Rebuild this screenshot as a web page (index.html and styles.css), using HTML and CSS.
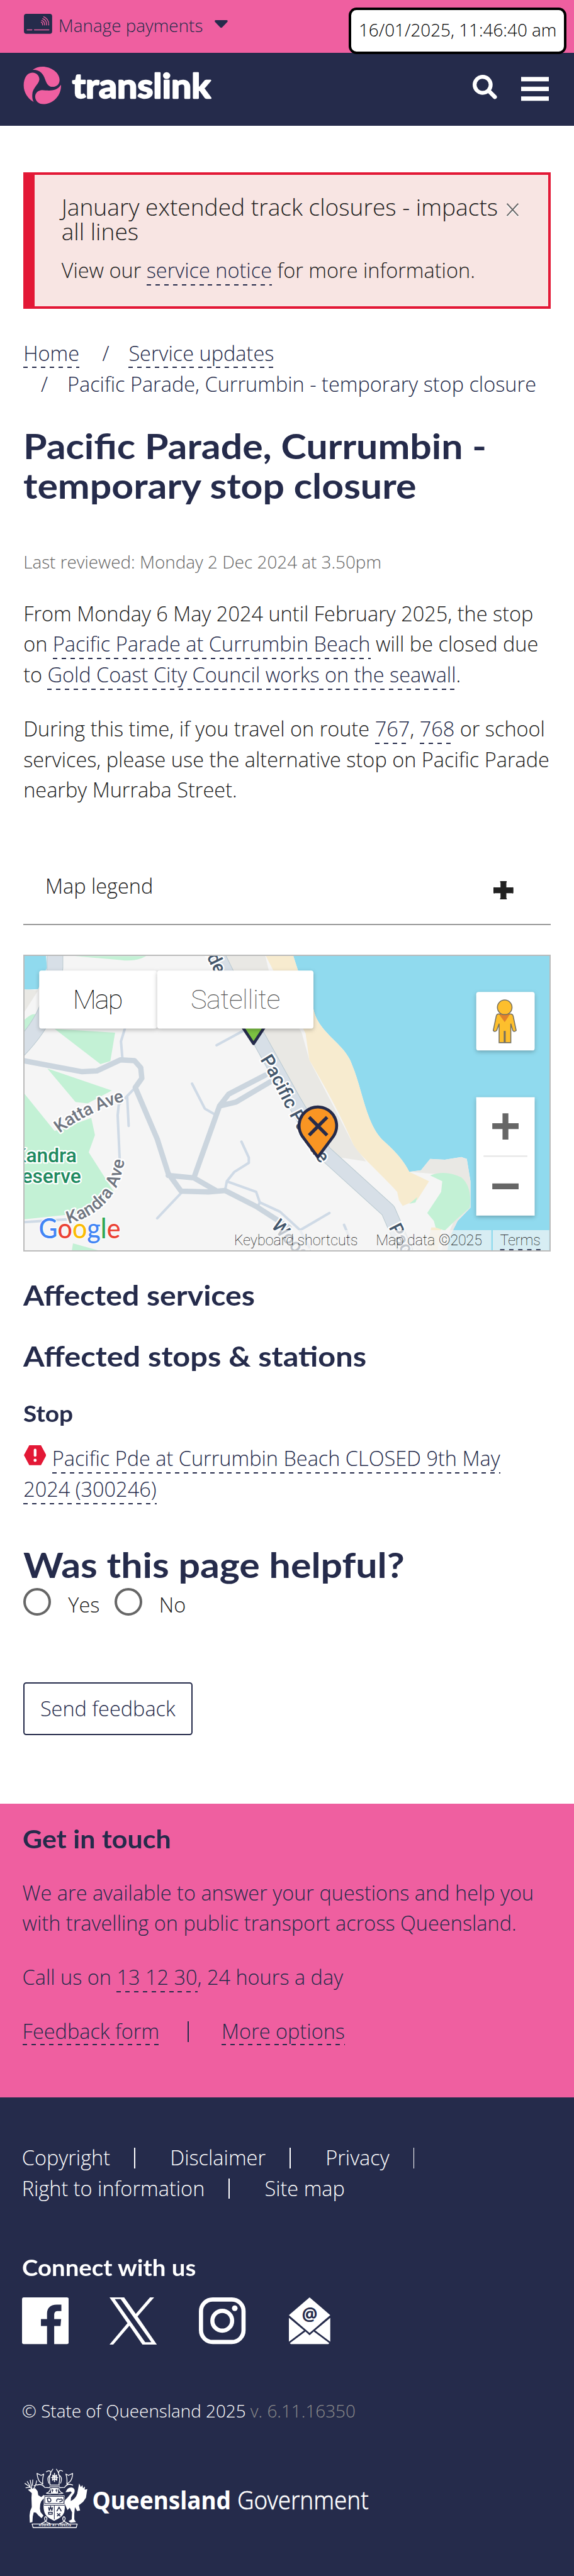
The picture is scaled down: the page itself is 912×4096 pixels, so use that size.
FILE: index.html
```html
<!DOCTYPE html>
<html lang="en">
<head>
<meta charset="utf-8">
<title>Pacific Parade, Currumbin - temporary stop closure | Translink</title>
<link rel="stylesheet" href="styles.css">
</head>
<body>
<div class="topbar">
  <svg class="card-icon" viewBox="0 0 58 41">
    <rect width="58" height="41" rx="5" fill="#252b4b"/>
    <g fill="none" stroke="#ef5fa0" stroke-width="1.7" stroke-linecap="round">
      <path d="M6.500 33h10M21.500 33h30"/>
      <path d="M35.500 17q3 1 3 6M36.500 13.500q6 2 6 9.500M38.500 10q8.500 3 8 13M40.500 6q11 4.500 10.500 17"/>
    </g>
  </svg>
  <span class="manage">Manage payments</span>
  <svg class="caret" viewBox="0 0 27 16"><path d="M2 0H25Q28 1 26 4L15.500 15Q13.500 16.500 11.500 15L1 4Q-1 1 2 0Z" fill="#252b4b"/></svg>
  <div class="clock">16/01/2025, 11:46:40 am</div>
</div>
<header class="header">
  <svg class="brand" viewBox="24 350 1164 232">
    <g fill="#ef5fa0">
      <path d="M78 370Q105 350 142 350C190 350 246 385 246 432C246 462 225 475 203 475C180 475 168 462 157 430C145 395 125 368 78 370Z"/>
      <path d="M86 568C50 550 24 510 24 466C24 420 45 387 78 387C105 387 122 408 121 430C118 460 78 480 77 525C76 545 80 558 86 568Z"/>
      <path d="M255 462C258 530 205 582 145 582C115 582 97 562 95 538C94 512 115 496 138 495C175 497 225 508 255 462Z"/>
    </g>
    <text class="brand-name" x="324" y="546" textLength="858" lengthAdjust="spacingAndGlyphs">translink</text>
  </svg>
  <div class="header-tools">
    <svg class="search-icon" viewBox="0 0 50 50"><circle cx="20.500" cy="20.500" r="16.500" fill="none" stroke="#fff" stroke-width="8"/><path d="M33 33L45.500 45.500" stroke="#fff" stroke-width="8.500" stroke-linecap="round"/></svg>
    <svg class="menu-icon" viewBox="0 0 57 50"><path d="M0 1h57v8H0zM0 21h57v8H0zM0 41h57v8H0z" fill="#fff" stroke="#fff"/></svg>
  </div>
</header>

<main class="main">
  <section class="alert">
    <div class="alert-title">January extended track closures - impacts<br>all lines</div>
    <p class="alert-text">View our <a>service notice</a> for more information.</p>
    <span class="alert-close"><svg viewBox="0 0 27 29"><path d="M2 4L25 28M25 4L2 28" stroke="#fff" stroke-width="2.500"/><path d="M2 1L25 26M25 1L2 26" stroke="#666" stroke-width="2.500"/></svg></span>
  </section>

  <nav class="crumbs">
    <div class="crumb-row"><a>Home</a><span class="slash">/</span><a>Service updates</a></div>
    <div class="crumb-row second"><span class="slash">/</span><span>Pacific Parade, Currumbin - temporary stop closure</span></div>
  </nav>

  <h1 class="title">Pacific Parade, Currumbin -<br>temporary stop closure</h1>
  <p class="reviewed">Last reviewed: Monday 2 Dec 2024 at 3.50pm</p>
  <p class="para">From Monday 6 May 2024 until February 2025, the stop<br>on <a>Pacific Parade at Currumbin Beach</a> will be closed due<br>to <a>Gold Coast City Council works on the seawall</a>.</p>
  <p class="para">During this time, if you travel on route <a>767</a>, <a>768</a> or school<br>services, please use the alternative stop on Pacific Parade<br>nearby Murraba Street.</p>

  <div class="legend"><span>Map legend</span><svg class="plus" viewBox="0 0 41 38"><path d="M20.500 1V37M1 19H40" stroke="#212121" stroke-width="12"/><path d="M15 1.500H26M15 36.500H26M1.500 14V24M39.500 14V24" stroke="#212121" stroke-width="3" stroke-linecap="round"/></svg></div>

  <div class="map">
  <svg class="map-canvas" viewBox="51 1965 1077 605" preserveAspectRatio="none">
    <rect x="51" y="1965" width="1077" height="605" fill="#f5f5f5"/>
    <g transform="translate(0 1750) scale(.7519 .5421)">
      <!-- water -->
      <path fill="#90daee" d="M800 390L815 455 857 600C870 690 945 730 962 810C990 900 1000 1040 1050 1100C1090 1150 1105 1180 1118 1214L1150 1208 1175 1165 1215 1168 1260 1158 1275 1165 1285 1250V1350L1250 1400 1225 1470 1222 1520H1510V390ZM60 390H126L129 440 105 522 60 525Z"/>
      <path fill="#e9e8e4" d="M60 522L105 527 60 625ZM600 390H724L735 455 825 690 845 790 965 1110 1000 1175 930 1160 880 1130 720 690ZM1118 1214L1150 1208 1175 1165 1215 1168 1260 1158 1275 1165 1285 1250V1350L1250 1400 1225 1470 1222 1512 1205 1512 1240 1400 1270 1270 1210 1225Z"/>
      <path fill="#f7ebcf" d="M724 390H800L815 455 857 600C870 690 945 730 962 810C990 900 1000 1040 1050 1100C1090 1150 1105 1180 1118 1214L1172 1250 1140 1320 1100 1343 1090 1322 1085 1290C1040 1220 980 1150 965 1110C930 1000 900 920 845 790L835 690ZM1178 1425H1206L1195 1512H1165Z"/>
      <path fill="#c3f1d5" d="M1175 1228Q1215 1205 1260 1235Q1290 1270 1283 1350L1250 1390 1215 1437 1190 1425 1185 1400 1167 1370 1205 1290 1208 1250ZM1118 1335L1140 1310 1135 1330ZM205 397L400 397Q370 420 330 412ZM60 650Q85 610 100 618L95 670 60 720ZM150 673L315 687 302 795 275 806ZM130 823L306 906 240 955 207 950ZM60 905L150 1060 250 1010 260 1075 243 1140 312 1290 230 1370 60 1395ZM200 1485L270 1512H197Z"/>
      <!-- roads -->
      <g class="roads">
        <g stroke="#cfdae6" stroke-width="4">
          <path d="M342 670L331 720 335 785M370 895L325 960 322 1000 328 1180M348 930L352 1040M525 880L560 975 585 995M660 1100L680 1160V1180L640 1215 620 1250 615 1285M620 1250L700 1290 710 1330 765 1365 820 1435 900 1370M710 1330L703 1350M592 735L665 680M495 1295L430 1390M60 1405L120 1400 190 1393M940 1415L960 1480M820 1435L850 1512"/>
        </g>
        <g stroke="#cbd5de" stroke-width="8.500">
          <path d="M60 792L225 835 265 832 330 790 368 793 385 820 388 860 370 895 430 1090 460 1220 495 1287 570 1290 615 1285 700 1345 790 1425M460 1228L530 1237 590 1285M530 1237L600 965 625 920 725 848M600 965L645 950 740 872"/>
        </g>
        <path stroke="#b9c9d0" stroke-width="24" d="M590 380L700 690 800 940 885 1140 1060 1360 1110 1520"/>
        <path stroke="#d7dfe7" stroke-width="22" d="M590 380L700 690 800 940 885 1140 1060 1360 1110 1520"/>
        <path stroke="#b9c9d0" stroke-width="26" d="M151 380V440C145 560 130 640 50 755"/>
        <path stroke="#d7dfe7" stroke-width="24" d="M151 380V440C145 560 130 640 50 755"/>
      </g>
    </g>
    <!-- place names -->
    <defs>
      <path id="katta" d="M123 2329Q180 2285 266 2260"/>
      <path id="kandra" d="M141 2515C195 2500 248 2465 257 2376"/>
      <path id="pacific" d="M534 2178C575 2240 600 2320 662 2396"/>
    </defs>
    <g class="label">
      <text class="road"><textPath href="#katta" textLength="150">Katta Ave</textPath></text>
      <text class="road"><textPath href="#kandra" textLength="186">Kandra Ave</textPath></text>
      <text class="major"><textPath href="#pacific" textLength="248">Pacific Parade</textPath></text>
      <text class="major" transform="translate(443 2004) rotate(64)" text-anchor="end">Parade</text>
      <text class="major" transform="translate(556 2520) rotate(48)">Woodl</text>
      <text class="major" transform="translate(798 2522) rotate(63)">Pacific</text>
      <text class="park" x="158" y="2389" text-anchor="end">Kandra</text>
      <text class="park" x="167" y="2431" text-anchor="end">Reserve</text>
    </g>
    <!-- stop markers -->
    <g stroke="#252b4b" stroke-width="6" stroke-linejoin="round">
      <path fill="#7cc142" d="M521 2145L488 2095A39 39 0 1 1 554 2095Z"/>
      <path fill="#f99523" d="M653 2378L621 2335A38.500 38.500 0 1 1 685 2335Z"/>
      <path d="M635 2296L672 2333M672 2296L635 2333" stroke-width="7"/>
    </g>
    <!-- google -->
    <text class="google" x="80" y="2545" textLength="168" lengthAdjust="spacingAndGlyphs"><tspan fill="#4285f4">G</tspan><tspan fill="#ea4335">o</tspan><tspan fill="#fbbc05">o</tspan><tspan fill="#4285f4">g</tspan><tspan fill="#34a853">l</tspan><tspan fill="#ea4335">e</tspan></text>
    <!-- controls -->
    <g class="control">
      <rect x="81" y="1995" width="242" height="119" rx="5"/>
      <rect x="323" y="1995" width="321" height="119" rx="5"/>
      <rect x="978" y="2039" width="120" height="120" rx="5"/>
      <rect x="978" y="2255" width="120" height="243"/>
    </g>
    <text class="tab" x="150" y="2073.500" textLength="103">Map</text>
    <text class="tab muted" x="392" y="2073.500" textLength="184">Satellite</text>
    <g fill="#fdbf2d" stroke="#757061" stroke-width="2">
      <path d="M1024 2084H1048Q1053 2084 1054 2089L1060 2118Q1056 2122 1053 2118L1049 2104V2143H1037.500V2120H1035.500V2143H1025V2104L1020 2118Q1016 2122 1013 2118L1019 2089Q1020 2084 1024 2084Z"/>
      <path d="M1025 2085H1047L1036.500 2101Z" fill="#e0812c" stroke="none"/>
      <circle cx="1036.500" cy="2070.500" r="15"/>
    </g>
    <path d="M1011 2314.500H1065M1038 2288V2342M1011 2438H1065" stroke="#666" stroke-width="12"/>
    <path d="M993 2376H1083" stroke="#e6e6e6" stroke-width="3"/>
    <path d="M470 2528H1009V2570H470ZM1012 2528H1128V2570H1012Z" fill="#f5f5f5" opacity=".7"/>
    <g class="credit">
      <text x="481" y="2559" textLength="254">Keyboard shortcuts</text>
      <text x="772" y="2559" textLength="218">Map data ©2025</text>
      <text x="1027" y="2559" textLength="83">Terms</text>
    </g>
    <path d="M1027 2568.500H1110" stroke="#252b4b" stroke-width="3" stroke-dasharray="9 9.500"/>
  </svg>
  </div>

  <h2 class="h2 services">Affected services</h2>
  <h2 class="h2 stops">Affected stops &amp; stations</h2>
  <h3 class="h3 stop">Stop</h3>
  <p class="stop-item"><svg class="warn" viewBox="0 0 46 41"><path d="M11 0H35L46 20.500 35 41H11L0 20.500Z" fill="#e31836"/><path d="M23 10V21" stroke="#fff" stroke-width="5.500" stroke-linecap="round"/><circle cx="23" cy="31" r="3.200" fill="#fff"/></svg><a>Pacific Pde at Currumbin Beach CLOSED 9th May<br>2024 (300246)</a></p>

  <h1 class="title helpful">Was this page helpful?</h1>
  <div class="radios">
    <label class="radio"><span class="dot"></span>Yes</label>
    <label class="radio"><span class="dot"></span>No</label>
  </div>
  <button class="feedback">Send feedback</button>
</main>

<section class="contact">
  <h2 class="h2 touch">Get in touch</h2>
  <p>We are available to answer your questions and help you<br>with travelling on public transport across Queensland.</p>
  <p>Call us on <a>13 12 30</a>, 24 hours a day</p>
  <p class="pair"><a>Feedback form</a><span class="bar"></span><a>More options</a></p>
</section>

<footer class="footer">
  <div class="links"><span>Copyright</span><i class="bar"></i><span>Disclaimer</span><i class="bar"></i><span>Privacy</span><i class="bar"></i></div>
  <div class="links"><span>Right to information</span><i class="bar"></i><span>Site map</span></div>
  <h3 class="h3 connect">Connect with us</h3>
  <div class="social">
    <svg class="fb" viewBox="34 69 215 288" preserveAspectRatio="none"><path fill="#fff" d="M42 69H241Q249 70 249 80V346Q249 356 241 357H182V245H211L214 203H182V175Q182 155 196 153H215V114H196C164 113 149 135 149 170V203H121V245H149V357H42Q34 356 34 346V80Q34 70 42 69Z"/></svg>
    <svg class="xx" viewBox="437 66 218 295" preserveAspectRatio="none"><path fill="#fff" fill-rule="evenodd" d="M437 66H504L557 168 622 66H641L565 184 655 361H589L528 241 452 361H437V358L519 226ZM461 77L600 343H628L488 77Z"/></svg>
    <svg class="ig" viewBox="0 0 96 96"><rect x="4.300" y="4.300" width="87.400" height="87.400" rx="24" fill="none" stroke="#fff" stroke-width="8.600"/><circle cx="48" cy="48" r="20.300" fill="none" stroke="#fff" stroke-width="8.600"/><circle cx="73.700" cy="22.300" r="5.800" fill="#fff"/></svg>
    <svg class="mail" viewBox="0 0 85 96"><path fill="#fff" d="M42.500 0L85 36.500 42.500 73 0 36.500ZM0 42L31 68 0 91ZM85 42L54 68 85 91ZM34 70L42.500 78 51 70 83 94 81 96H4L2 94Z"/><text x="42.500" y="47.500" text-anchor="middle" class="at">@</text></svg>
  </div>
  <p class="copy">© State of Queensland 2025 <span>v. 6.11.16350</span></p>
  <svg class="gov" viewBox="44 5068 720 136">
    <g transform="translate(44 5068) scale(.3333)">
      <g fill="none" stroke="#fff" stroke-width="5" stroke-linejoin="round" stroke-linecap="round">
        <path d="M62 362H340L334 384H68ZM120 358Q160 345 152 322Q142 310 138 328Q140 352 172 358M284 358Q244 345 252 322Q262 310 266 328Q264 352 232 358"/>
        <path d="M172 118Q160 60 190 24M228 118Q240 60 212 24M150 40Q180 20 176 60Q150 70 165 110M250 36Q222 20 226 60Q252 70 238 110M92 50L118 62 134 54Q124 84 128 116L108 100Q96 84 92 50ZM312 50L286 62 270 54Q280 84 276 116L296 100Q310 84 312 50ZM92 122Q120 110 140 136L170 138M312 122Q280 108 262 136L232 138M172 122H230M170 132H232M176 142Q172 165 150 172L176 176M226 142Q230 165 252 172L226 176"/>
        <path d="M190 60L200 72 212 60 214 92 200 82 188 92ZM200 50V100M182 76H220" stroke-width="6"/>
        <path d="M18 112L44 130 64 150M24 138L46 136M32 100L50 130M50 92L60 140M66 90L64 124M90 96Q84 130 68 148M90 120L74 126"/>
      </g>
      <g fill="#fff">
        <path d="M36 150L62 144 82 142 96 160 100 184 118 196 134 182 138 200 118 222 112 240 110 268 114 288 132 310 120 326 100 308 86 292 72 290 66 316 64 350 48 354 46 310 50 282 60 258 58 200 60 172Z"/>
        <path d="M268 166Q282 132 310 138Q330 146 322 170L302 198 300 220Q330 208 340 176L352 112 362 134 372 122 376 142 388 130 386 150 402 146 394 200 376 226 350 246 358 278 340 282 326 258 322 300 322 334 332 350 300 354 286 344 306 334 308 290 294 262 280 276 262 236Q260 214 278 202L306 168Q300 156 290 164Z"/>
        <path d="M134 186H262V240Q266 262 260 290Q248 322 198 342Q148 322 138 290Q130 262 134 240Z"/>
        <path d="M180 140H222V176H178Z"/>
      </g>
      <g fill="none" stroke="#252b4b" stroke-width="4">
        <path d="M140 192H258V236H140ZM136 246H262M199 246V334M188 146V166M182 153H194M212 146V166M206 153H218"/>
        <path d="M156 204Q176 196 178 216Q176 230 160 224ZM214 224Q210 202 232 210Q250 202 248 220L230 226M164 258L168 280 176 256 184 280 188 258M164 290H186V302H164ZM214 284L228 258 242 284M216 296L236 314M236 296L216 314" stroke-width="6"/>
      </g>
      <text x="104" y="378" textLength="198" class="motto">AUDAX AT FIDELIS</text>
    </g>
    <text class="qld" x="188" y="5158.500" textLength="285" lengthAdjust="spacingAndGlyphs">Queensland</text>
    <text class="govt" x="486" y="5158.500" textLength="270" lengthAdjust="spacingAndGlyphs">Government</text>
  </svg>
</footer>
</body>
</html>
```
FILE: styles.css
```css
/* 1rem = 10 design pixels; the design is 1179 wide */
html { font-size: 7.7354px; }
* { box-sizing: border-box; }
body {
  margin: 0;
  background: #fff;
  color: #212121;
  font-family: "Open Sans", "Noto Sans", sans-serif;
  font-weight: 300;
  font-size: 4.2rem;
  line-height: 6.3rem;
  white-space: nowrap;
  overflow-x: hidden;
}
svg { display: block; }
p, h1, h2, h3 { margin: 0; }
a {
  color: #252b4b;
  padding-bottom: .3rem;
  background: repeating-linear-gradient(90deg, #252b4b 0 .9rem, transparent .9rem 1.8rem) left bottom / 100% .3rem no-repeat;
  -webkit-box-decoration-break: clone;
  box-decoration-break: clone;
}

.topbar {
  position: relative;
  display: flex;
  height: 10.8rem;
  padding: 2.9rem 0 0 4.9rem;
  background: #ef5fa0;
  color: #252b4b;
  font-size: 3.6rem;
}
.card-icon { width: 5.8rem; height: 4.1rem; }
.manage { margin: -.8rem 0 0 1.3rem; line-height: 6.3rem; width: 30.3rem; }
.caret { width: 2.7rem; height: 1.6rem; margin: 1.3rem 0 0 1.8rem; }
.clock {
  position: absolute;
  top: 1.5rem;
  right: 1.5rem;
  width: 44.8rem;
  height: 9.6rem;
  border: .6rem solid #000;
  border-radius: 1.6rem;
  background: #fff;
  color: #000;
  line-height: 8.1rem;
  text-align: center;
}
.header {
  display: flex;
  justify-content: space-between;
  height: 15rem;
  padding: 2.9rem 5.2rem 0 4.8rem;
  background: #252b4b;
}
.brand { width: 38.8rem; height: 7.7rem; overflow: visible; }
.brand-name {
  font: 700 212px Lato, sans-serif;
  fill: #fff;
  stroke: #fff;
  stroke-width: 9px;
  stroke-linejoin: round;
}
.header-tools { display: flex; gap: 4.9rem; padding-top: 1.7rem; }
.search-icon { width: 5rem; height: 5rem; }
.menu-icon { width: 5.7rem; height: 5rem; margin-top: .4rem; }

.main { padding: 9.6rem 4.8rem 0; height: 345.02rem; }
.alert {
  position: relative;
  height: 28.05rem;
  padding: 4rem 0 0 5.5rem;
  border: .6rem solid #e31836;
  border-left-width: 2.4rem;
  background: #f8e5e3;
}
.alert-title { font-size: 4.8rem; line-height: 5.04rem; }
.alert-text { margin-top: 2.5rem; }
.alert-close { position: absolute; top: 5.9rem; right: 5.9rem; }
.alert-close svg { width: 2.7rem; height: 2.9rem; }

.crumbs { margin-top: 6.12rem; color: #252b4b; }
.crumb-row { display: flex; height: 6.3rem; }
.crumb-row a { height: 6.05rem; }
.crumb-row .slash { margin: 0 4rem 0 4.7rem; }
.crumb-row.second .slash { margin: 0 4rem 0 3.6rem; }

.title, .h2, .h3 {
  color: #252b4b;
  font-family: Lato, "Open Sans", sans-serif;
  font-weight: 700;
  width: max-content;
  transform: scaleX(1.092);
  transform-origin: left;
}
.title { margin-top: 5.53rem; font-size: 7.2rem; line-height: 8.1rem; }
.reviewed { margin-top: 8.98rem; color: #666; font-size: 3.6rem; line-height: 5.4rem; }
.para { margin-top: 4.77rem; }
.legend {
  display: flex;
  justify-content: space-between;
  height: 15.2rem;
  margin-top: 9.4rem;
  padding: 4.1rem 7.6rem 0 4.5rem;
  border-bottom: .3rem solid #999;
}
.plus { width: 4.1rem; height: 3.8rem; margin-top: 2rem; }

.map { height: 61.1rem; margin-top: 6rem; border: .3rem solid #bbb; }
.map-canvas { width: 100%; height: 100%; overflow: hidden; }
.roads path { fill: none; vector-effect: non-scaling-stroke; stroke-linecap: round; stroke-linejoin: round; }
.label text {
  font: 500 36px Roboto, sans-serif;
  fill: #6f7580;
  stroke: #fff;
  stroke-width: 6px;
  stroke-linejoin: round;
  paint-order: stroke;
}
.label .major { font-size: 38px; fill: #43566b; }
.label .park { font-size: 41px; fill: #1e8a60; }
.google { font: 500 56px Lato, sans-serif; stroke: #fff; stroke-width: 3px; paint-order: stroke; }
.control rect { fill: #fff; filter: drop-shadow(0 3px 4px rgba(0, 0, 0, .25)); }
.tab { font: 100 56px Roboto, sans-serif; fill: #000; }
.muted { fill: #565656; }
.credit text { font: 100 30px Roboto, sans-serif; fill: #000; }

.h2 { font-size: 5.7rem; line-height: 6.3rem; }
.h3 { font-size: 4.6rem; line-height: 5.4rem; }
.services { margin-top: 5.8rem; }
.stops { margin-top: 6.26rem; transform: scaleX(1.104); }
.stop { margin-top: 5.96rem; }
.stop-item { margin-top: 3.35rem; }
.warn { display: inline-block; width: 4.6rem; height: 4.1rem; margin: 0 1.2rem 0 .1rem; vertical-align: .1rem; }
.helpful { margin-top: 8.3rem; }
.radios { display: flex; gap: 3rem; margin-top: .8rem; height: 5.7rem; }
.radio { display: flex; gap: 3.5rem; line-height: 6.9rem; }
.dot { width: 5.7rem; height: 5.7rem; border: .6rem solid #666; border-radius: 50%; }
.feedback {
  display: block;
  width: 34.7rem;
  height: 10.75rem;
  margin-top: 13.7rem;
  padding: 0;
  border: .3rem solid #252b4b;
  border-radius: .6rem;
  background: #fff;
  color: #252b4b;
  font: inherit;
}

.contact { height: 60.28rem; padding: 4.04rem 4.6rem 0; background: #ef5fa0; color: #252b4b; }
.contact p { margin-top: 4.8rem; }
.touch { font-size: 5.1rem; }
.pair { display: flex; }
.pair a { height: 6.05rem; }
.bar { width: .2rem; height: 4.2rem; margin: 1.1rem 6.8rem 0 5.1rem; background: currentColor; }
.pair .bar { margin-left: 5.8rem; }

.footer { height: 98.7rem; padding: 9.32rem 4.5rem 0; background: #252b4b; color: #fff; }
.links { display: flex; height: 6.3rem; }
.links .bar { margin: 1.1rem 7.2rem 0 4.9rem; }
.connect { margin-top: 10.48rem; color: #fff; transform: scaleX(1.078); }
.social { display: flex; margin-top: 3.3rem; height: 9.8rem; }
.fb, .ig { width: 9.6rem; height: 9.6rem; margin-top: .1rem; }
.xx { width: 9.8rem; height: 9.8rem; margin: 0 8.6rem 0 8.4rem; }
.mail { width: 8.5rem; height: 9.6rem; margin: .1rem 0 0 8.9rem; }
.at { font: 700 36px "Open Sans", sans-serif; fill: #252b4b; }
.copy { margin-top: 10.97rem; font-size: 3.6rem; line-height: 5.4rem; }
.copy span { color: #8a8a8a; }
.gov { width: 72rem; height: 13.6rem; margin-top: 8.4rem; }
.motto { font: 700 18px "Open Sans", sans-serif; fill: #fff; }
.qld { font: 700 52px "Noto Sans", sans-serif; fill: #fff; }
.govt { font: 300 52px "Noto Sans", "Open Sans", sans-serif; fill: #fff; stroke: #fff; stroke-width: .6px; }
```
